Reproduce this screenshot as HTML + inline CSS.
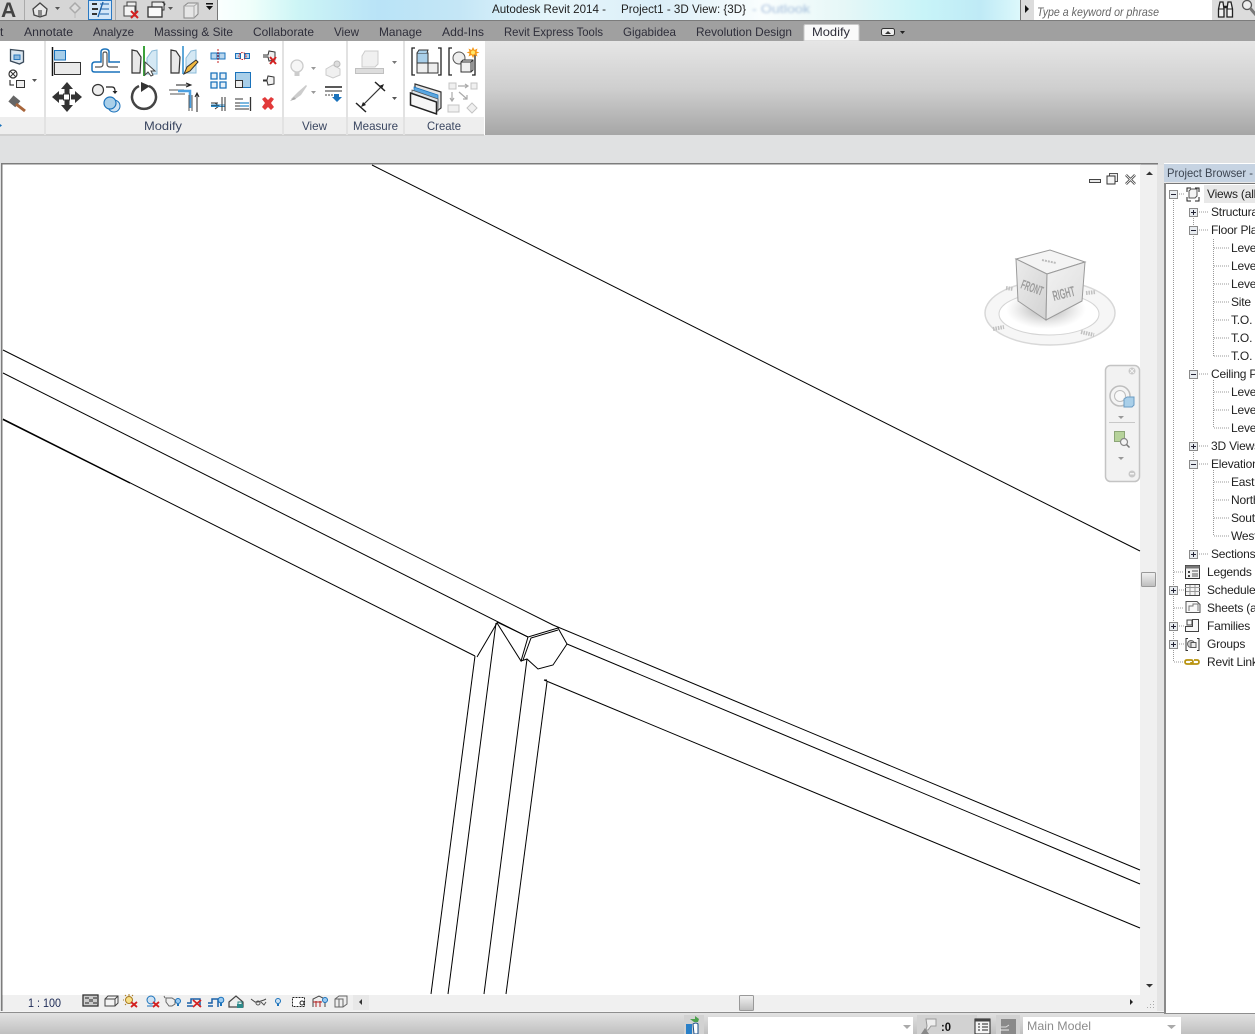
<!DOCTYPE html>
<html><head><meta charset="utf-8"><title>Autodesk Revit 2014</title>
<style>
html,body{margin:0;padding:0;background:#fff;width:1255px;height:1034px;overflow:hidden}
svg{display:block;position:absolute;left:0;top:0}
text{font-family:"Liberation Sans",sans-serif;font-size:12px;fill:#222;white-space:pre}
.t{fill:#2e2e3a}
.l{fill:#3a4660}
.g{fill:none;stroke:#333;stroke-width:1}
.b{fill:none;stroke:#1a72bb;stroke-width:1.5}
.d{stroke:#999;stroke-width:1;stroke-dasharray:1 1;fill:none}
.v{stroke:#000;stroke-width:1;fill:none}
.tree text{letter-spacing:-.2px}
</style></head><body>
<svg width="1255" height="1034" viewBox="0 0 1255 1034" xmlns="http://www.w3.org/2000/svg">
<defs>
<linearGradient id="tb" x1="0" x2="1" y1="0" y2="0">
<stop offset="0" stop-color="#fbffff"/><stop offset=".04" stop-color="#f0fffb"/><stop offset=".1" stop-color="#cdf5f6"/><stop offset=".2" stop-color="#b9e3f7"/><stop offset=".3" stop-color="#c4e6f6"/><stop offset=".42" stop-color="#e6f6fb"/><stop offset=".55" stop-color="#dbeef8"/><stop offset=".68" stop-color="#fafefe"/><stop offset=".78" stop-color="#e6f7f7"/><stop offset=".88" stop-color="#c8f4f8"/><stop offset=".95" stop-color="#bfeaf6"/><stop offset="1" stop-color="#dcf8fb"/>
</linearGradient>
<linearGradient id="rg" x1="0" x2="0" y1="0" y2="1"><stop offset="0" stop-color="#e6e6e6"/><stop offset=".5" stop-color="#cfcfcf"/><stop offset="1" stop-color="#a6a6a6"/></linearGradient>
<linearGradient id="sb" x1="0" x2="0" y1="0" y2="1"><stop offset="0" stop-color="#e2e2e2"/><stop offset="1" stop-color="#c0c0c0"/></linearGradient>
<linearGradient id="cl" x1="0" x2="1" y1="0" y2="1"><stop offset="0" stop-color="#ececec"/><stop offset="1" stop-color="#d2d2d2"/></linearGradient>
<linearGradient id="cr" x1="0" x2="1" y1="0" y2="1"><stop offset="0" stop-color="#f2f2f2"/><stop offset="1" stop-color="#dedede"/></linearGradient>
<linearGradient id="th" x1="0" x2="0" y1="0" y2="1"><stop offset="0" stop-color="#f2f2f2"/><stop offset="1" stop-color="#bdbdbd"/></linearGradient>
<radialGradient id="sh"><stop offset="0" stop-color="#8c8c8c" stop-opacity=".8"/><stop offset="1" stop-color="#bbb" stop-opacity="0"/></radialGradient>
<filter id="bl" x="-20%" y="-50%" width="140%" height="200%"><feGaussianBlur stdDeviation="1.300"/></filter>
</defs>

<!-- base -->
<rect width="1255" height="1034" fill="#e0e1e2"/>

<!-- title bar -->
<rect x="0" y="0" width="217" height="20" fill="#d6d6d6"/>
<rect x="217" y="0" width="803" height="20" fill="url(#tb)"/>
<rect x="1020" y="0" width="235" height="20" fill="#dcdcdc"/>
<rect x="217" y="0" width="1" height="20" fill="#777"/>
<rect x="1020" y="0" width="1" height="20" fill="#777"/>
<text x="1" y="17" style="font-size:21px;font-weight:bold;fill:#444">A</text>
<rect x="24" y="0" width="1" height="20" fill="#aaa"/>
<!-- home -->
<path d="M33 9 L40 3 L47 9 L46 15 L40 17 L34 15 Z" fill="#e8e8e8" stroke="#444" stroke-width="1.300"/><path d="M38 10h4v6h-4z" fill="#888"/>
<path d="M55 7h5l-2.500 3z" fill="#555"/>
<path d="M70 8 L75 3 L80 8 L75 13 Z" fill="#ddd" stroke="#aaa" stroke-width="1.500"/><path d="M75 14v4" stroke="#bbb"/>
<!-- thin lines toggle -->
<rect x="88.500" y="0.500" width="23" height="19" fill="#d2e6f8" stroke="#2b79c2"/>
<path d="M92 4h5M92 9h6M92 14h5" stroke="#333" stroke-width="2"/><path d="M100 4h9M100 9h9M100 14h9" stroke="#1a60a8"/><path d="M98 17L103 2" stroke="#1a60a8" stroke-width="1.300"/>
<rect x="115" y="0" width="1" height="20" fill="#aaa"/>
<!-- close hidden -->
<rect x="127" y="2" width="9" height="9" fill="#eee" stroke="#444"/><rect x="124" y="6" width="11" height="10" fill="#f4f4f4" stroke="#444"/><path d="M131 11l7 7M138 11l-7 7" stroke="#d32020" stroke-width="2"/>
<!-- switch windows -->
<rect x="152" y="2" width="12" height="8" fill="#eee" stroke="#333"/><rect x="148" y="7" width="14" height="10" fill="#fafafa" stroke="#333" stroke-width="1.300"/><path d="M162 2l3 2-1 2" stroke="#333" fill="none"/>
<path d="M168 7h5l-2.500 3z" fill="#555"/>
<path d="M184 6l4-3h10v11l-4 4h-10z" fill="#e6e6e6" stroke="#888"/><path d="M184 6h10v12M194 6l4-3" stroke="#aaa" fill="none"/>
<path d="M206 3h7v1.500h-7zM206 6h7l-3.500 4z" fill="#111"/>

<text x="492" y="13" textLength="114" lengthAdjust="spacingAndGlyphs" fill="#111">Autodesk Revit 2014 -</text>
<text x="621" y="13" textLength="125" lengthAdjust="spacingAndGlyphs" fill="#111">Project1 - 3D View: {3D}</text>
<text x="752" y="13" textLength="58" lengthAdjust="spacingAndGlyphs" filter="url(#bl)" style="fill:#6f93c4;opacity:.6">- Outlook</text>

<!-- search -->
<path d="M1025 5l4 4-4 4z" fill="#111"/>
<rect x="1034" y="0" width="178" height="20" fill="#fff"/>
<text x="1037" y="16" textLength="122" lengthAdjust="spacingAndGlyphs" style="font-style:italic;font-size:11.500px;fill:#666">Type a keyword or phrase</text>
<!-- binoculars -->
<path d="M1218.500 9l1.500-7h3l1 7v8h-5.500zM1227 9l1-7h3l1.500 7v8H1227z" fill="#f2f2f2" stroke="#222" stroke-width="1.300"/><path d="M1219 9h5M1227 9h5" stroke="#222"/><path d="M1224 7h3" stroke="#222" stroke-width="2.500"/>
<!-- key -->
<circle cx="1247" cy="5" r="4.500" fill="#eee" stroke="#555" stroke-width="1.300"/><path d="M1250 8l6 7" stroke="#777" stroke-width="3"/>

<!-- tabs -->
<rect x="0" y="20" width="1255" height="21" fill="#a0a0a0"/>
<rect x="0" y="20" width="1255" height="1" fill="#7c7c7c"/>
<path d="M804 41V26q0-1.500 1.500-1.500h52q1.500 0 1.500 1.500v15z" fill="#fafafa" stroke="#c8c8c8"/>
<g class="tabs">
<text class="t" x="0" y="36">t</text>
<text class="t" x="24" y="36" textLength="49" lengthAdjust="spacingAndGlyphs">Annotate</text>
<text class="t" x="93" y="36" textLength="41" lengthAdjust="spacingAndGlyphs">Analyze</text>
<text class="t" x="154" y="36" textLength="79" lengthAdjust="spacingAndGlyphs">Massing &amp; Site</text>
<text class="t" x="253" y="36" textLength="61" lengthAdjust="spacingAndGlyphs">Collaborate</text>
<text class="t" x="334" y="36" textLength="25" lengthAdjust="spacingAndGlyphs">View</text>
<text class="t" x="379" y="36" textLength="43" lengthAdjust="spacingAndGlyphs">Manage</text>
<text class="t" x="442" y="36" textLength="42" lengthAdjust="spacingAndGlyphs">Add-Ins</text>
<text class="t" x="504" y="36" textLength="99" lengthAdjust="spacingAndGlyphs">Revit Express Tools</text>
<text class="t" x="623" y="36" textLength="53" lengthAdjust="spacingAndGlyphs">Gigabidea</text>
<text class="t" x="696" y="36" textLength="96" lengthAdjust="spacingAndGlyphs">Revolution Design</text>
<text class="t" x="812" y="36" textLength="38" lengthAdjust="spacingAndGlyphs">Modify</text>
</g>
<rect x="881.500" y="28.500" width="13" height="7" rx="2" fill="#eee" stroke="#333"/><path d="M885 34l3-3 3 3z" fill="#333"/>
<path d="M900 31h5l-2.500 3z" fill="#222"/>

<!-- ribbon -->
<rect x="485" y="41" width="770" height="94" fill="url(#rg)"/>
<rect x="0" y="41" width="485" height="94" fill="#fff"/>
<rect x="0" y="117" width="484" height="17" fill="#eeeeee"/>
<rect x="0" y="134" width="484" height="2" fill="#d0d0d0"/>
<rect x="44" y="41" width="2" height="94" fill="#e2e2e2"/>
<rect x="282" y="41" width="2" height="94" fill="#e2e2e2"/>
<rect x="346" y="41" width="2" height="94" fill="#e2e2e2"/>
<rect x="403" y="41" width="2" height="94" fill="#e2e2e2"/>
<text class="l" x="144" y="130" textLength="38" lengthAdjust="spacingAndGlyphs">Modify</text>
<text class="l" x="302" y="130" textLength="25" lengthAdjust="spacingAndGlyphs">View</text>
<text class="l" x="353" y="130" textLength="45" lengthAdjust="spacingAndGlyphs">Measure</text>
<text class="l" x="427" y="130" textLength="34" lengthAdjust="spacingAndGlyphs">Create</text>
<path d="M0 124l2 1.500-2 1.500z" fill="#1a72bb"/>

<!-- left panel icons -->
<path d="M10.500 49.500l13 1.500v11l-4 2-9-3z" fill="#dbe6ef" stroke="#3a4a5a" stroke-width="1.300"/><rect x="14" y="55" width="6" height="4.500" fill="#8ebbe0" stroke="#2a78bd"/>
<circle cx="13" cy="74" r="4" fill="#fff" stroke="#333" stroke-width="1.200"/><path d="M10.500 71.500l5 5M15.500 71.500l-5 5" stroke="#333"/><rect x="16.500" y="80.500" width="8" height="7" fill="#eee" stroke="#333"/><path d="M10 80v5h4" stroke="#111" fill="none"/>
<path d="M32 79h5l-2.500 3z" fill="#555"/>
<rect x="10" y="97" width="9" height="8" transform="rotate(40 14 101)" fill="#666"/><path d="M16 104l9 7" stroke="#a8663c" stroke-width="3"/>

<!-- Align -->
<path d="M52.500 47v29" stroke="#111" stroke-width="1.500"/><rect x="54.500" y="50.500" width="11" height="9.500" fill="#a7cee9" stroke="#1a72bb"/><rect x="54.500" y="62.500" width="26" height="12" fill="#eaeaea" stroke="#333"/>
<!-- Offset -->
<path d="M92 70v-5q0-3 3-3h6v-10q0-3 4-3t4 3v10h11" fill="none" stroke="#1a72bb" stroke-width="1.500"/>
<path d="M95 67h5q3 0 3-3v-10q0-2 2-2t2 2v10q0 3 3 3h8" fill="none" stroke="#555" stroke-width="1.200"/>
<path d="M92 70q0 2 3 2h25" fill="none" stroke="#1a72bb" stroke-width="1.500"/>
<!-- Mirror pick -->
<path d="M132 50l5 1 4 6-1 16-8 0z" fill="#e8e8e8" stroke="#333" stroke-width="1.200"/><path d="M144 46v30" stroke="#3ca33c" stroke-width="2"/><path d="M157 50l-5 1-5 7v16h10z" fill="#d4e8f4" stroke="#8bbbd8"/><path d="M145 62v13l3-3 3 4 2-1-2-4h4z" fill="#fff" stroke="#444"/>
<!-- Mirror draw -->
<path d="M171 50l5 1 4 6-1 16-8 0z" fill="#e8e8e8" stroke="#333" stroke-width="1.200"/><path d="M183 46v28" stroke="#2a8ccc" stroke-width="1.500"/><path d="M196 50l-5 1-5 7v15h10z" fill="#d4e8f4" stroke="#8bbbd8"/><path d="M184 74l3-7 9-7 2 2-8 9z" fill="#f2b940" stroke="#333"/>
<!-- small row 1 -->
<rect x="211" y="53" width="6" height="6" fill="#b8d6ee" stroke="#1a72bb"/><rect x="219" y="53" width="6" height="6" fill="#b8d6ee" stroke="#1a72bb"/><path d="M218 49v14" stroke="#c42020" stroke-dasharray="2 1"/>
<rect x="235.500" y="53.500" width="5" height="5" fill="#b8d6ee" stroke="#1a72bb"/><rect x="244.500" y="53.500" width="5" height="5" fill="#b8d6ee" stroke="#1a72bb"/><circle cx="242.500" cy="56" r="3.500" fill="none" stroke="#c42020" stroke-dasharray="1.500 1"/>
<path d="M263 55h5l1-4 6 1v8l-6 1-1-4h-5" fill="#eee" stroke="#333"/><path d="M270 57l6 7M276 57l-6 7" stroke="#d32020" stroke-width="2"/>
<!-- small row 2 -->
<path d="M211 73h6v6h-6zM220 73h6v6h-6zM211 82h6v6h-6zM220 82h6v6h-6z" fill="#e6f0f8" stroke="#1a72bb" stroke-width="1.300"/>
<rect x="235.500" y="72.500" width="15" height="15" fill="#a9cfe9" stroke="#1a72bb"/><rect x="235.500" y="80.500" width="7" height="7" fill="#eee" stroke="#333"/>
<path d="M263 80h4l1-4 6 1v7l-6 1-1-4h-4" fill="#f2f2f2" stroke="#333"/>
<!-- row 3 small -->
<path d="M211 106h8M215 103l4 3-4 3M211 103h7" stroke="#333" fill="none"/><path d="M211 105h14v1.500h-14" stroke="#2a8ccc" fill="none"/><path d="M225 97v14M222 97v14" stroke="#333"/>
<path d="M235 99h8M235 103h14M235 106h14M235 109h14" stroke="#333"/><path d="M240 103h9M240 106h9" stroke="#2a8ccc" stroke-width="1.300"/><path d="M250.500 97v14" stroke="#333" stroke-width="1.300"/>
<path d="M262 99l3-2 3 3 3-3 3 2-3 4 3 4-3 3-3-3-3 3-3-3 3-4z" fill="#e23a3a"/>

<!-- Move -->
<g fill="#333"><path d="M67 82l6 7h-12zM67 112l6-7h-12zM52 97l7-6v12zM82 97l-7-6v12z"/><rect x="64.500" y="87" width="5" height="7"/><rect x="64.500" y="100" width="5" height="7"/><rect x="57" y="94.500" width="6" height="5"/><rect x="71" y="94.500" width="6" height="5"/></g>
<rect x="63.500" y="94" width="6" height="6" fill="#fff" stroke="#333"/>
<!-- Copy -->
<circle cx="98" cy="90" r="5.500" fill="#eee" stroke="#333" stroke-width="1.200"/><path d="M106 87h6q3 0 3 4" fill="none" stroke="#222" stroke-width="1.200"/><path d="M112.500 91h5l-2.500 3z" fill="#222"/>
<circle cx="114" cy="106" r="6" fill="#cfe2f2" stroke="#1a72bb"/><circle cx="110" cy="103" r="6" fill="#a9cfe9" stroke="#1a72bb" stroke-width="1.200"/>
<!-- Rotate -->
<path d="M149 86a12 12 0 1 1-10 0" fill="none" stroke="#444" stroke-width="2.500"/><path d="M141 82l9 4-9 6z" fill="#333"/>
<!-- Trim -->
<path d="M169 90h15M170 94h15" stroke="#555"/><path d="M176 85h14M186 83l5 2-5 2" fill="none" stroke="#222"/>
<path d="M178 91h12v17" fill="none" stroke="#4ca0e0" stroke-width="2.500"/>
<path d="M189 95v16M192 95v16" stroke="#555"/><path d="M197 112v-18M195 97l2-4 2 4" stroke="#222" fill="none"/>

<!-- View panel -->
<circle cx="297" cy="66" r="6" fill="#f6f6f6" stroke="#ccc" stroke-width="1.300"/><rect x="294.500" y="72" width="5" height="4" fill="#ccc"/>
<path d="M311 67h5l-2.500 3z" fill="#999"/>
<path d="M326 69l7-4 7 4v6l-7 3-7-3z" fill="#f0f0f0" stroke="#ccc"/><circle cx="337" cy="64" r="3" fill="#ddd" stroke="#bbb"/>
<path d="M291 99l7-7 8-7 1 1-6 9-7 5z" fill="#ccc"/><path d="M290 101l4-4 2 2z" fill="#aaa"/>
<path d="M311 91h5l-2.500 3z" fill="#999"/>
<path d="M325 87h17" stroke="#222" stroke-width="1.500"/><path d="M325 91h17" stroke="#333"/><path d="M325 95h9" stroke="#444" stroke-dasharray="2 1"/><path d="M334 94h5v3h3l-5 5-5-5h2z" fill="#1a72bb"/>

<!-- Measure -->
<path d="M362 56l3-5h13v13l-3 3h-13z" fill="#f0f0f0" stroke="#ccc"/><rect x="355.500" y="68.500" width="28" height="5" fill="#ddd" stroke="#c0c0c0"/>
<path d="M392 61h5l-2.500 3z" fill="#777"/>
<path d="M363 105l19-19" stroke="#333" stroke-width="1.200"/><path d="M356 103l10 9M375 82l10 9" stroke="#222" stroke-width="1.500"/><path d="M361 107l2-5 3 3zM384 84l-5 2 3 3z" fill="#222"/>
<path d="M392 97h5l-2.500 3z" fill="#555"/>

<!-- Create -->
<path d="M415 48h-3v27h3M438 48h3v27h-3" fill="none" stroke="#222" stroke-width="1.300"/>
<rect x="417" y="53" width="11" height="10" fill="#a9cfe9" stroke="#333"/><rect x="417" y="63" width="11" height="10" fill="#eee" stroke="#333"/><rect x="428" y="63" width="10" height="10" fill="#eee" stroke="#333"/><path d="M417 53l2-3h9l-1 3" fill="#a9cfe9" stroke="#333"/>
<path d="M452 48h-3v27h3M475 52v23h-3" fill="none" stroke="#222" stroke-width="1.300"/>
<circle cx="459" cy="58" r="6" fill="#eee" stroke="#555"/><path d="M461 62l2-2h10v10l-2 2h-10z" fill="#f0f0f0" stroke="#333"/><path d="M461 62h10v10M471 62l2-2" fill="none" stroke="#333"/>
<path d="M473 47l1.500 3 3-1.500-1 3 3 1-3 1 1 3-3-1.500-1.500 3-1.500-3-3 1.500 1-3-3-1 3-1-1-3 3 1.500z" fill="#f59a1c"/><circle cx="473" cy="52.500" r="2" fill="#ffe76a"/>
<!-- parts -->
<path d="M415 84l26 8v16l-4 3-22-14z" fill="#e4e4e4" stroke="#333" stroke-width="1.200"/>
<path d="M414 87l24 8v9l-24-8z" fill="#5aa6e0" stroke="#1a72bb" stroke-width=".7"/>
<path d="M412 90l26 9v12l-26-9z" fill="#dfe4e8" stroke="#555" stroke-width=".8"/>
<path d="M410.500 93l26 9v12l-26-9z" fill="#f6f6f6" stroke="#222" stroke-width="1.500"/>
<g fill="#f0f0f0" stroke="#c4c4c4"><rect x="449" y="83" width="7" height="6"/><rect x="471" y="83" width="6" height="6"/><rect x="448" y="105" width="11" height="7"/><path d="M472 103l5 5-5 5-5-5z"/></g>
<path d="M458 86h10M465 84l3 2-3 2M452 92v9M450 98l2 3 2-3M459 92l8 7M467 95v4h-4" fill="none" stroke="#aaa" stroke-width="1.200"/>

<!-- viewport -->
<rect x="1" y="163" width="1140" height="832" fill="#fff"/>
<rect x="1" y="163" width="1157" height="1.500" fill="#7c7c7c"/>
<rect x="1" y="163" width="1.500" height="850" fill="#7c7c7c"/>
<rect x="1140" y="165" width="17" height="848" fill="#f0f0f0"/>
<rect x="1157" y="165" width="7" height="848" fill="#e4e4e4"/>
<path d="M1146 175l3.500-3.500 3.500 3.500z" fill="#333"/>
<path d="M1146 984l3.500 3.500 3.500-3.500z" fill="#333"/>
<rect x="1141.500" y="572.500" width="14" height="14" rx="1" fill="url(#th)" stroke="#999"/>

<!-- drawing -->
<g class="v">
<path d="M372 165L1140 551"/>
<path d="M3 350L553 625L1140 870"/>
<path d="M3 373L528 637"/>
<path d="M567 644L1140 884"/>
<path d="M544 680L1140 928"/>
<path d="M3 419L475 656"/>
<path d="M3 419.500L130 483" stroke-width="1.300"/>
<path d="M475 656L431 994"/>
<path d="M496 623L448 994"/>
<path d="M527 659L484 994"/>
<path d="M547 682L506 994"/>
<path d="M544 680H547"/>
<path d="M477 657L497 623L521 661L528 637L558 628L567 644L553 665L538 669L527 659L521 661"/>
<path d="M523 660L531 638L558 630"/>
<path d="M497 622L528 637"/>
</g>

<!-- window controls -->
<rect x="1089.500" y="179.500" width="11" height="3" fill="#e8e8e8" stroke="#444"/>
<rect x="1109.500" y="173.500" width="8" height="8" fill="#eee" stroke="#555"/><rect x="1107" y="176" width="8" height="8" fill="#f6f6f6" stroke="#333"/>
<path d="M1126 175l9 9M1135 175l-9 9" stroke="#333" stroke-width="2.500"/><path d="M1126 175l9 9M1135 175l-9 9" stroke="#eee"/>

<!-- viewcube -->
<ellipse cx="1050" cy="313" rx="65" ry="32" fill="#f6f6f6" stroke="#d8d8d8" stroke-width="1.500"/>
<ellipse cx="1049" cy="314" rx="50" ry="21" fill="#fff" stroke="#d4d4d4"/>
<ellipse cx="1046" cy="309" rx="40" ry="20" fill="url(#sh)"/>
<path d="M993 329l11-2M1081 332l13 3M1006 288l7 1M1086 293l10-1" stroke="#c0c0c0" stroke-width="4" stroke-dasharray="1.500 1" fill="none"/>
<path d="M1016 259L1050 250L1085 262L1047 274Z" fill="#f4f4f4" stroke="#9a9a9a"/>
<path d="M1016 259L1047 274L1046 320L1018 301Z" fill="url(#cl)" stroke="#9a9a9a"/>
<path d="M1047 274L1085 262L1082 301L1046 320Z" fill="url(#cr)" stroke="#9a9a9a"/>
<text transform="translate(1020,288) rotate(20) scale(.55,1.100)" style="font-size:12px;font-weight:bold;fill:#9c9c9c">FRONT</text>
<text transform="translate(1054,301) rotate(-14) scale(.6,1.200)" style="font-size:12px;font-weight:bold;fill:#9c9c9c">RIGHT</text>
<path d="M1042 260l14 3" stroke="#bbb" stroke-width="2" stroke-dasharray="2 1"/>

<!-- nav bar -->
<rect x="1105.500" y="365.500" width="34" height="116" rx="5" fill="#f2f2f2" stroke="#c4c4c4" stroke-width="1.500"/>
<circle cx="1132" cy="371" r="3.500" fill="#c8c8c8"/><path d="M1130 369l4 4M1134 369l-4 4" stroke="#f4f4f4"/>
<circle cx="1120" cy="396" r="10" fill="#f4f4f4" stroke="#bdbdbd" stroke-width="1.500"/><circle cx="1120" cy="396" r="5.500" fill="#f8f8f8" stroke="#bdbdbd"/>
<path d="M1124 399l3-2h7v8l-2 2h-8z" fill="#a9cfe9" stroke="#6b9cc4"/>
<path d="M1118 416h6l-3 3z" fill="#999"/>
<rect x="1109" y="422" width="26" height="1" fill="#c8c8c8"/>
<rect x="1114.500" y="431.500" width="10" height="10" fill="#b6d29a" stroke="#8ca577"/>
<circle cx="1124" cy="442" r="3.500" fill="#f4f4f4" stroke="#888" stroke-width="1.200"/><path d="M1126.500 444.500l3 3" stroke="#777" stroke-width="1.500"/>
<path d="M1118 457h6l-3 3z" fill="#999"/>
<circle cx="1132" cy="474" r="3.500" fill="#c8c8c8"/><rect x="1130" y="473" width="4" height="1.500" fill="#f4f4f4"/>

<!-- view control bar -->
<rect x="3" y="995" width="1137" height="18" fill="#f0f0f0"/>
<text x="28" y="1007" textLength="33" lengthAdjust="spacingAndGlyphs" style="fill:#1c2a55">1 : 100</text>
<rect x="83" y="995" width="15" height="11" fill="#ccc" stroke="#333" stroke-width="1.300"/><path d="M85 997h4v2h-4zM93 997h4v2h-4zM89 999h4v3h-4zM85 1002h4v2h-4zM93 1002h4v2h-4z" fill="#777"/>
<path d="M105 999l3-3h10v7l-3 3h-10z" fill="#f4f4f4" stroke="#444"/><path d="M105 999h10v7M115 999l3-3" fill="none" stroke="#444"/>
<circle cx="129" cy="1000" r="3.500" fill="#f7e08a" stroke="#a87a20"/><path d="M129 994v2M124 1000h-1M126 996l-1-1M132 996l1-1M126 1004l-1 1" stroke="#a87a20"/><path d="M131 1002l6 5M137 1002l-6 5" stroke="#d32020" stroke-width="1.800"/>
<circle cx="151" cy="1000" r="4" fill="#cfe2f2" stroke="#1a72bb"/><path d="M147 1006h8" stroke="#1a72bb"/><path d="M153 1002l6 5M159 1002l-6 5" stroke="#d32020" stroke-width="1.800"/>
<path d="M166 998h6l3 2v4l-3 2h-3l-3-4z" fill="#eee" stroke="#666"/><path d="M165 998l-1-2" stroke="#666"/><circle cx="178" cy="1001" r="2.500" fill="#9ccaf0" stroke="#1a72bb"/><path d="M177 1004h2v2h-2z" fill="#1a72bb"/>
<path d="M187 1003h4v-4h9v8M187 1006h6" fill="none" stroke="#1a60a8" stroke-width="1.500"/><path d="M193 1000l8 7M201 1000l-8 7" stroke="#d32020" stroke-width="1.800"/>
<path d="M208 1003h4v-4h6v8M208 1006h5" fill="none" stroke="#1a60a8" stroke-width="1.500"/><circle cx="221" cy="1000" r="2.800" fill="#9ccaf0" stroke="#1a72bb"/><path d="M220 1003h2v3h-2z" fill="#1a72bb"/>
<path d="M229 1002l7-6 7 6v5h-14z" fill="#eee" stroke="#444" stroke-width="1.200"/><rect x="237" y="1004" width="6" height="4" fill="#2c8a8a"/><path d="M238 1004v-2h4v2" stroke="#2c8a8a" fill="none"/>
<path d="M251 999l4 3 3 0 6-2 2-1" fill="none" stroke="#444"/><circle cx="258" cy="1003" r="2" fill="none" stroke="#555"/><path d="M261 1002l3 3 2-3" fill="none" stroke="#555"/>
<circle cx="278" cy="1001" r="2.500" fill="#cfe2f2" stroke="#1a72bb"/><path d="M277 1004h2v2h-2z" fill="#1a72bb"/>
<rect x="292.500" y="997.500" width="12" height="9" fill="#fff" stroke="#222" stroke-dasharray="2 1"/><circle cx="302" cy="1003" r="2" fill="#fff" stroke="#222"/>
<path d="M313 1007v-8l6-3 6 3v8" fill="#eee" stroke="#444"/><path d="M313 1002h9M316 1001v6M320 1001v6" stroke="#b02020"/><circle cx="325" cy="1000" r="2.500" fill="#9ccaf0" stroke="#1a72bb"/>
<path d="M335 999l4-3h8v8l-4 3h-8z" fill="#eee" stroke="#666"/><path d="M335 999h8v8M339 999v8" fill="none" stroke="#666"/>
<rect x="353" y="995" width="16" height="15" fill="#e8e8e8"/>
<path d="M362 999v6l-3-3z" fill="#333"/>
<rect x="739.500" y="995.500" width="14" height="15" rx="1" fill="url(#th)" stroke="#999"/>
<path d="M1130 999v6l3-3z" fill="#222"/>
<path d="M1147 1007h1v1h-1zM1150 1004h1v1h-1zM1150 1007h1v1h-1zM1153 1001h1v1h-1zM1153 1004h1v1h-1zM1153 1007h1v1h-1z" fill="#aaa"/>
<rect x="0" y="1011" width="1164" height="1" fill="#f4f4f4"/>

<!-- project browser -->
<rect x="1164" y="163" width="91" height="850" fill="#fff"/>
<rect x="1164" y="164" width="91" height="18" fill="#c6d3e2"/>
<rect x="1164" y="182" width="91" height="1" fill="#e8e8e8"/>
<rect x="1164" y="183" width="91" height="1" fill="#777"/>
<rect x="1164" y="183" width="2" height="830" fill="#8a8a8a"/>
<text x="1167" y="177" textLength="86" lengthAdjust="spacingAndGlyphs" style="fill:#3c4450">Project Browser -</text>
<rect x="1204" y="185" width="51" height="18" fill="#e8e8e8"/>

<!-- dotted guides -->
<path class="d" d="M1173.500 200V662M1193.500 218V555M1213.500 239V356M1213.500 380V428M1213.500 470V536"/>
<path class="d" d="M1179 194H1185M1199 212H1209M1199 230H1209M1199 374H1209M1199 446H1209M1199 464H1209M1199 554H1209"/>
<path class="d" d="M1214 248H1229M1214 266H1229M1214 284H1229M1214 302H1229M1214 320H1229M1214 338H1229M1214 356H1229M1214 392H1229M1214 410H1229M1214 428H1229M1214 482H1229M1214 500H1229M1214 518H1229M1214 536H1229"/>
<path class="d" d="M1174 572H1184M1179 590H1184M1174 608H1184M1179 626H1184M1179 644H1184M1174 662H1184"/>

<!-- expanders -->
<g fill="#e8ecf0" stroke="#8a8a8a">
<rect x="1169.500" y="190.500" width="8" height="8"/>
<rect x="1189.500" y="208.500" width="8" height="8"/>
<rect x="1189.500" y="226.500" width="8" height="8"/>
<rect x="1189.500" y="370.500" width="8" height="8"/>
<rect x="1189.500" y="442.500" width="8" height="8"/>
<rect x="1189.500" y="460.500" width="8" height="8"/>
<rect x="1189.500" y="550.500" width="8" height="8"/>
<rect x="1169.500" y="586.500" width="8" height="8"/>
<rect x="1169.500" y="622.500" width="8" height="8"/>
<rect x="1169.500" y="640.500" width="8" height="8"/>
</g>
<path d="M1171 194.500h5M1191 212.500h5M1193.500 210v5M1191 230.500h5M1191 374.500h5M1191 446.500h5M1193.500 444v5M1191 464.500h5M1191 554.500h5M1193.500 552v5M1171 590.500h5M1173.500 588v5M1171 626.500h5M1173.500 624v5M1171 644.500h5M1173.500 642v5" stroke="#223" fill="none"/>

<!-- tree icons -->
<path d="M1187 192v-4h4M1195 188h4v4M1199 197v4h-4M1191 201h-4v-4" fill="none" stroke="#222"/>
<path d="M1189 191l2-2h6v7l-2 2h-6z" fill="#f4f4f4" stroke="#555"/>
<rect x="1185.500" y="565.500" width="14" height="13" fill="#f2f2f2" stroke="#333"/><rect x="1185.500" y="565.500" width="14" height="3" fill="#777"/><path d="M1188 571h2v2h-2zM1188 575h2v2h-2z" fill="#444"/><path d="M1192 571h6M1192 574h6M1192 576h6" stroke="#555"/>
<rect x="1185.500" y="584.500" width="14" height="11" fill="#f4f4f4" stroke="#444"/><path d="M1185 587.500h15M1186 591.500h14M1190 585v10M1195 585v10" stroke="#999"/>
<path d="M1186 601.500h11l3 3v8h-14z" fill="#f8f8f8" stroke="#555"/><path d="M1189 611v-5h4v-2h5v7" fill="none" stroke="#777"/>
<path d="M1192.500 619.500h6v12h-13v-5h7z" fill="#f8f8f8" stroke="#444"/><path d="M1192.500 626.500h-7M1187 620h5v5h-5z" stroke="#444" fill="#f8f8f8"/>
<path d="M1188 638.500h-2v12h2M1197 638.500h2v12h-2" fill="none" stroke="#333"/><circle cx="1191" cy="644" r="3.500" fill="#ccc" stroke="#666"/><rect x="1191" y="642.500" width="5" height="5" fill="#eee" stroke="#555"/>
<path d="M1187 660h4q2 0 2 2t-2 2h-4q-2 0-2-2t2-2zM1195 660h-1M1194 660h3q2 0 2 2t-2 2h-4q-2 0-2-2" fill="none" stroke="#b8920e" stroke-width="1.700"/>

<!-- tree text -->
<g class="tree">
<text x="1207" y="198">Views (all)</text>
<text x="1211" y="216">Structural Plans</text>
<text x="1211" y="234">Floor Plans</text>
<text x="1231" y="252">Level 1</text>
<text x="1231" y="270">Level 2</text>
<text x="1231" y="288">Level 3</text>
<text x="1231" y="306">Site</text>
<text x="1231" y="324">T.O. Fnd</text>
<text x="1231" y="342">T.O. Fnd</text>
<text x="1231" y="360">T.O. Fnd</text>
<text x="1211" y="378">Ceiling Plans</text>
<text x="1231" y="396">Level 1</text>
<text x="1231" y="414">Level 2</text>
<text x="1231" y="432">Level 3</text>
<text x="1211" y="450">3D Views</text>
<text x="1211" y="468">Elevations</text>
<text x="1231" y="486">East</text>
<text x="1231" y="504">North</text>
<text x="1231" y="522">South</text>
<text x="1231" y="540">West</text>
<text x="1211" y="558">Sections</text>
<text x="1207" y="576">Legends</text>
<text x="1207" y="594">Schedules</text>
<text x="1207" y="612">Sheets (all)</text>
<text x="1207" y="630">Families</text>
<text x="1207" y="648">Groups</text>
<text x="1207" y="666">Revit Links</text>
</g>

<!-- status bar -->
<rect x="0" y="1013" width="1255" height="21" fill="url(#sb)"/>
<rect x="0" y="1012" width="1164" height="1" fill="#8e8e8e"/>
<rect x="1164" y="1013" width="91" height="1" fill="#8e8e8e"/>
<rect x="684" y="1015" width="20" height="19" fill="#d2d2d2"/>
<path d="M686 1024h6v10h-6z" fill="#2a80c8"/><path d="M693 1024q3-2 5 0v10h-4z" fill="#fff" stroke="#1a4f88"/><path d="M690 1019h5v-3l4 3-1 3h-4z" fill="#4ca04c"/>
<rect x="708" y="1017" width="205" height="17" fill="#fff"/>
<path d="M903 1025h8l-4 4z" fill="#aaa"/>
<rect x="917" y="1015" width="60" height="19" fill="#d2d2d2"/>
<path d="M926 1019h10v7h-5l-3 4h-2l1-4z" fill="#eee" stroke="#999"/><path d="M921 1034l4-6 4 6z" fill="#888"/>
<text x="941" y="1031" style="font-weight:bold;fill:#111" textLength="10" lengthAdjust="spacingAndGlyphs">:0</text>
<rect x="975" y="1019" width="15" height="15" fill="#f4f4f4" stroke="#222"/><rect x="975" y="1019" width="15" height="2.500" fill="#444"/><path d="M978 1024h2M982 1024h6M978 1027h2M982 1027h6M978 1030h2M982 1030h6" stroke="#222"/>
<rect x="996" y="1015" width="24" height="19" fill="#d2d2d2"/>
<rect x="1001" y="1019" width="15" height="15" fill="#8a8a8a"/><path d="M1001 1027h5l3-2" stroke="#ddd" fill="none"/><path d="M1000 1030h9" stroke="#eee"/>
<rect x="1023" y="1017" width="158" height="17" fill="#fff"/>
<text x="1027" y="1030" textLength="64" lengthAdjust="spacingAndGlyphs" style="fill:#8c8c8c">Main Model</text>
<path d="M1167 1025h9l-4.500 4z" fill="#aaa"/>
</svg>
</body></html>
